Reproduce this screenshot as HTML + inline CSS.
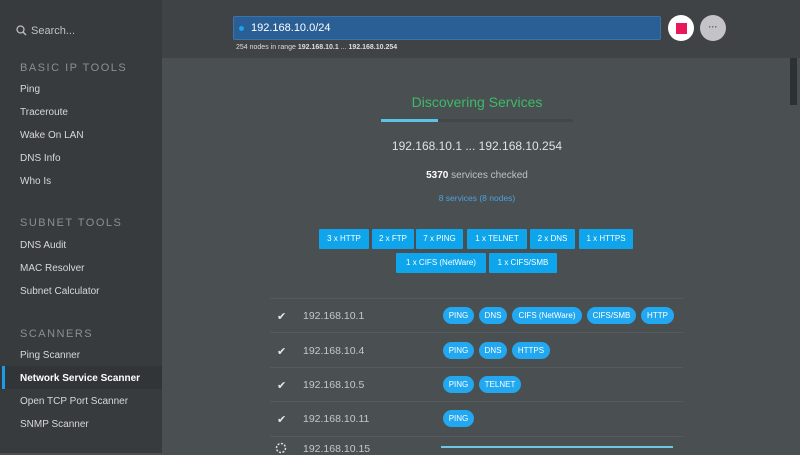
<!DOCTYPE html>
<html><head><style>
*{margin:0;padding:0;box-sizing:border-box}
body{width:800px;height:453px;overflow:hidden;background:#4a4f51;font-family:"Liberation Sans",sans-serif;position:relative}
.a{position:absolute;white-space:nowrap}
#sb{left:0;top:0;width:162px;height:453px;background:#383b3d}
.h{left:20px;font-size:11px;letter-spacing:1.5px;color:#8a8f93}
.i{left:20px;font-size:10px;color:#d6d8da}
#top{left:162px;top:0;width:638px;height:58px;background:#3f4346}
.t{background:#0ea5ec;color:#fff;font-size:8px;height:20px;line-height:20px;text-align:center;border-radius:1px}
.p{background:#22a8f0;color:#fff;font-size:8px;height:17px;line-height:17px;text-align:center;border-radius:9px}
.ip{left:303px;font-size:10.5px;color:#c4c7c9}
.ck{left:277px;font-size:11px;color:#e8e8e8}
.ln{left:270px;width:413px;height:1px;background:#555b5d}
</style></head><body>
<div class="a" id="sb"></div>
<svg class="a" style="left:16px;top:25px" width="11" height="11"><circle cx="4.5" cy="4.5" r="3.5" stroke="#bbb" stroke-width="1.3" fill="none"/><line x1="7" y1="7" x2="10" y2="10" stroke="#bbb" stroke-width="1.4"/></svg>
<div class="a" style="left:31px;top:25px;font-size:11px;color:#bfc2c4">Search...</div>
<div class="a h" style="top:62px">BASIC IP TOOLS</div>
<div class="a i" style="top:84px">Ping</div>
<div class="a i" style="top:107px">Traceroute</div>
<div class="a i" style="top:130px">Wake On LAN</div>
<div class="a i" style="top:153px">DNS Info</div>
<div class="a i" style="top:176px">Who Is</div>
<div class="a h" style="top:217px">SUBNET TOOLS</div>
<div class="a i" style="top:240px">DNS Audit</div>
<div class="a i" style="top:263px">MAC Resolver</div>
<div class="a i" style="top:286px">Subnet Calculator</div>
<div class="a h" style="top:328px">SCANNERS</div>
<div class="a i" style="top:350px">Ping Scanner</div>
<div class="a" style="left:0;top:366px;width:162px;height:23px;background:#323537"></div>
<div class="a" style="left:2px;top:366px;width:3px;height:23px;background:#1e9be8"></div>
<div class="a i" style="top:373px;color:#fff;font-weight:bold">Network Service Scanner</div>
<div class="a i" style="top:396px">Open TCP Port Scanner</div>
<div class="a i" style="top:419px">SNMP Scanner</div>

<div class="a" id="top"></div>
<div class="a" style="left:233px;top:16px;width:428px;height:24px;background:#2a5f96;border:1px solid #3b72aa;border-radius:2px"></div>
<div class="a" style="left:239px;top:26px;width:5px;height:5px;border-radius:50%;background:#1ea0f0"></div>
<div class="a" style="left:251px;top:22px;font-size:11px;color:#fff">192.168.10.0/24</div>
<div class="a" style="left:236px;top:44px;font-size:7px;color:#ddd">254 nodes in range <b>192.168.10.1</b> ... <b>192.168.10.254</b></div>
<div class="a" style="left:668px;top:15px;width:26px;height:26px;border-radius:50%;background:#fff"></div>
<div class="a" style="left:676px;top:23px;width:11px;height:11px;background:#e8185a"></div>
<div class="a" style="left:700px;top:15px;width:26px;height:26px;border-radius:50%;background:#c4c4c8;color:#555a88;font-size:9px;text-align:center;line-height:24px;font-weight:bold">···</div>
<div class="a" style="left:790px;top:58px;width:7px;height:47px;background:#2e3133"></div>

<div class="a" style="left:377px;width:200px;text-align:center;top:94px;font-size:14px;color:#3cbb6a">Discovering Services</div>
<div class="a" style="left:381px;top:119px;width:192px;height:3px;background:#42474a"></div>
<div class="a" style="left:381px;top:119px;width:57px;height:3px;background:#5bc3e4"></div>
<div class="a" style="left:377px;width:200px;text-align:center;top:139px;font-size:12px;color:#e0e2e3">192.168.10.1 ... 192.168.10.254</div>
<div class="a" style="left:377px;width:200px;text-align:center;top:170px;font-size:10px;color:#bfc2c4"><b style="color:#fff">5370</b> services checked</div>
<div class="a" style="left:377px;width:200px;text-align:center;top:193px;font-size:8.5px;color:#4aa3e0">8 services (8 nodes)</div>

<div class="a t" style="left:319px;top:229px;width:50px">3 x HTTP</div>
<div class="a t" style="left:372px;top:229px;width:42px">2 x FTP</div>
<div class="a t" style="left:416px;top:229px;width:47px">7 x PING</div>
<div class="a t" style="left:467px;top:229px;width:60px">1 x TELNET</div>
<div class="a t" style="left:530px;top:229px;width:45px">2 x DNS</div>
<div class="a t" style="left:579px;top:229px;width:54px">1 x HTTPS</div>
<div class="a t" style="left:396px;top:253px;width:90px">1 x CIFS (NetWare)</div>
<div class="a t" style="left:489px;top:253px;width:68px">1 x CIFS/SMB</div>

<div class="a ln" style="top:298px"></div>
<div class="a ck" style="top:310px">✔</div><div class="a ip" style="top:310px">192.168.10.1</div>
<div class="a p" style="left:443px;top:307px;width:31px">PING</div>
<div class="a p" style="left:479px;top:307px;width:28px">DNS</div>
<div class="a p" style="left:512px;top:307px;width:70px">CIFS (NetWare)</div>
<div class="a p" style="left:587px;top:307px;width:49px">CIFS/SMB</div>
<div class="a p" style="left:641px;top:307px;width:33px">HTTP</div>
<div class="a ln" style="top:332px"></div>
<div class="a ck" style="top:345px">✔</div><div class="a ip" style="top:345px">192.168.10.4</div>
<div class="a p" style="left:443px;top:342px;width:31px">PING</div>
<div class="a p" style="left:479px;top:342px;width:28px">DNS</div>
<div class="a p" style="left:512px;top:342px;width:38px">HTTPS</div>
<div class="a ln" style="top:367px"></div>
<div class="a ck" style="top:379px">✔</div><div class="a ip" style="top:379px">192.168.10.5</div>
<div class="a p" style="left:443px;top:376px;width:31px">PING</div>
<div class="a p" style="left:479px;top:376px;width:42px">TELNET</div>
<div class="a ln" style="top:401px"></div>
<div class="a ck" style="top:413px">✔</div><div class="a ip" style="top:413px">192.168.10.11</div>
<div class="a p" style="left:443px;top:410px;width:31px">PING</div>
<div class="a ln" style="top:436px"></div>
<svg class="a" style="left:275px;top:442px" width="12" height="12"><circle cx="6" cy="6" r="4.5" stroke="#ddd" stroke-width="1.5" fill="none" stroke-dasharray="2 1.5"/></svg>
<div class="a ip" style="top:443px">192.168.10.15</div>
<div class="a" style="left:441px;top:446px;width:232px;height:2px;background:#6fc6e0"></div>
</body></html>
